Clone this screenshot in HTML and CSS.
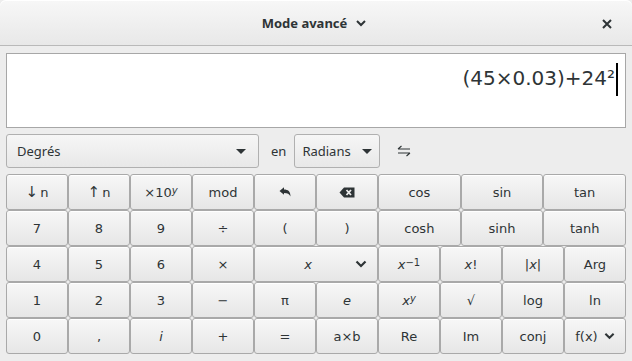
FILE: index.html
```html
<!DOCTYPE html>
<html lang="fr">
<head>
    <meta charset="UTF-8">
    <title>Calculatrice</title>
    <link rel="stylesheet" href="styles.css">
</head>
<body>
    <header class="titlebar">
        <div class="title">Mode avancé
            <svg class="chevron" width="10" height="8" viewBox="0 0 10 8"><path d="M1 2 L5 6 L9 2" fill="none" stroke="#2e3436" stroke-width="2"/></svg>
        </div>
        <svg class="close" width="10" height="10" viewBox="0 0 10 10"><path d="M1 1 L9 9 M9 1 L1 9" stroke="#2e3436" stroke-width="2"/></svg>
    </header>

    <main class="content">
        <div class="display">
            <span class="expr">(45×0.03)+24²</span><span class="cursor"></span>
        </div>

        <div class="convert-row">
            <div class="combo combo-wide">
                <span>Degrés</span>
                <span class="tri"></span>
            </div>
            <span class="label-en">en</span>
            <div class="combo combo-small">
                <span>Radians</span>
                <span class="tri"></span>
            </div>
            <div class="swap">
                <svg width="14" height="12" viewBox="0 0 14 12"><path d="M1 4 H13 M1 4 L4.5 1 M13 8 H1 M13 8 L9.5 11" fill="none" stroke="#2e3436" stroke-width="1.1"/></svg>
            </div>
        </div>

        <div class="keypad">
            <button class="key"><span class="arrow">↓</span>n</button>
            <button class="key"><span class="arrow">↑</span>n</button>
            <button class="key">×10<sup><i>y</i></sup></button>
            <button class="key">mod</button>
            <button class="key">
                <svg width="12" height="11" viewBox="0 0 12 11"><path d="M0.5 4 L5 0.3 V2.6 C9 2.6 11.5 4.5 11.5 9.5 C10.5 7 8.5 5.9 5 5.9 V7.8 Z" fill="#2e3436"/></svg>
            </button>
            <button class="key">
                <svg width="16" height="11" viewBox="0 0 16 11"><path d="M0.5 5.5 L5 0.5 H15.5 V10.5 H5 Z" fill="#2e3436"/><path d="M7.5 3 L12 8 M12 3 L7.5 8" stroke="#ededed" stroke-width="1.8"/></svg>
            </button>
            <button class="key wide">cos</button>
            <button class="key wide">sin</button>
            <button class="key wide">tan</button>

            <button class="key">7</button>
            <button class="key">8</button>
            <button class="key">9</button>
            <button class="key">÷</button>
            <button class="key">(</button>
            <button class="key">)</button>
            <button class="key wide">cosh</button>
            <button class="key wide">sinh</button>
            <button class="key wide">tanh</button>

            <button class="key">4</button>
            <button class="key">5</button>
            <button class="key">6</button>
            <button class="key">×</button>
            <button class="key double">
                <span class="double-label"><i>x</i></span>
                <svg class="menu-chev" width="12" height="8" viewBox="0 0 12 8"><path d="M1.5 1.5 L6 6 L10.5 1.5" fill="none" stroke="#2e3436" stroke-width="2.2"/></svg>
            </button>
            <button class="key"><i>x</i><sup>−1</sup></button>
            <button class="key"><i>x</i>!</button>
            <button class="key">|<i>x</i>|</button>
            <button class="key">Arg</button>

            <button class="key">1</button>
            <button class="key">2</button>
            <button class="key">3</button>
            <button class="key">−</button>
            <button class="key">π</button>
            <button class="key"><i>e</i></button>
            <button class="key"><i>x</i><sup><i>y</i></sup></button>
            <button class="key">√</button>
            <button class="key">log</button>
            <button class="key">ln</button>

            <button class="key">0</button>
            <button class="key">,</button>
            <button class="key"><i>i</i></button>
            <button class="key">+</button>
            <button class="key">=</button>
            <button class="key">a×b</button>
            <button class="key">Re</button>
            <button class="key">Im</button>
            <button class="key">conj</button>
            <button class="key">f(x)
                <svg class="fx-chev" width="11" height="8" viewBox="0 0 12 8"><path d="M1.5 1.5 L6 6 L10.5 1.5" fill="none" stroke="#2e3436" stroke-width="2.2"/></svg>
            </button>
        </div>
    </main>
</body>
</html>
```

FILE: styles.css
```css
body {
    margin: 0;
    background-color: #ededed;
    font-family: 'DejaVu Sans', sans-serif;
    font-size: 13px;
    color: #2e3436;
    width: 632px;
    height: 361px;
    overflow: hidden;
}
.titlebar {
    height: 45px;
    border-bottom: 1px solid #b9b9b9;
    background: linear-gradient(#f7f7f7, #e8e8e8);
    border-radius: 6px 6px 0 0;
    display: flex;
    align-items: center;
    justify-content: center;
    position: relative;
    box-shadow: inset 0 1px 0 #ffffff;
}
.title {
    font-family: 'Noto Sans', sans-serif;
    font-weight: bold;
    font-size: 13px;
    display: flex;
    align-items: center;
    gap: 9px;
    margin-right: 4px;
    margin-top: 1px;
}
.close {
    position: absolute;
    right: 20px;
    top: 19px;
}
.content {
    padding: 7px 6px 0 6px;
}
.display {
    height: 73px;
    background-color: white;
    border: 1px solid #a7a7a7;
    display: flex;
    justify-content: flex-end;
    align-items: flex-start;
    padding: 0 7px 0 0;
}
.expr {
    font-size: 20px;
    margin-top: 12px;
    line-height: 24px;
}
.cursor {
    width: 2px;
    height: 33px;
    background-color: #000;
    margin-top: 9px;
    margin-left: 1px;
}
.convert-row {
    display: flex;
    align-items: center;
    margin-top: 6px;
    height: 34px;
}
.combo {
    border: 1px solid #b0b0b0;
    border-radius: 3px;
    background: linear-gradient(#f6f6f6, #e8e8e8);
    display: flex;
    align-items: center;
    justify-content: space-between;
    box-sizing: border-box;
    height: 34px;
    font-family: 'Noto Sans', sans-serif;
}
.combo-wide {
    width: 253px;
    padding: 0 12px 0 10px;
}
.combo-small {
    width: 86px;
    padding: 0 7px 0 7px;
    margin-left: 8px;
}
.tri {
    width: 0;
    height: 0;
    border-left: 5px solid transparent;
    border-right: 5px solid transparent;
    border-top: 5px solid #2e3436;
}
.label-en {
    margin-left: 12px;
    font-family: 'Noto Sans', sans-serif;
}
.swap {
    margin-left: 17px;
    display: flex;
    margin-top: -1px;
}
.keypad {
    margin-top: 6px;
    display: grid;
    grid-template-columns: repeat(30, 1fr);
    grid-auto-rows: 36px;
    width: 620px;
}
.key {
    grid-column: span 3;
    margin: 0;
    padding: 0;
    border: 1px solid #a9a9a9;
    border-radius: 3px;
    background: linear-gradient(#f7f7f7, #e6e6e6);
    font-family: 'DejaVu Sans', sans-serif;
    font-size: 13px;
    color: #2e3436;
    display: flex;
    align-items: center;
    justify-content: center;
    box-shadow: inset 0 1px 0 #ffffff;
}
.key.wide {
    grid-column: span 4;
}
.key.double {
    grid-column: span 6;
    justify-content: space-between;
    padding: 0 10px 0 0;
}
.double-label {
    flex: 1;
    text-align: center;
    padding-left: 6px;
}
.key sup {
    font-size: 10px;
    line-height: 0;
    position: relative;
    top: -1px;
}
.arrow {
    font-size: 15px;
    margin-right: 2px;
}
.fx-chev {
    margin-left: 6px;
}
```
